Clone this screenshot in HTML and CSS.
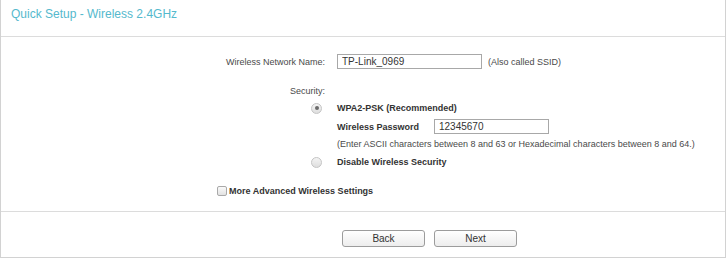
FILE: index.html
```html
<!DOCTYPE html>
<html lang="en">
<head>
  <meta charset="UTF-8" />
  <meta name="viewport" content="width=device-width, initial-scale=1.0"/>
  <title>Quick Setup</title>
  <link rel="stylesheet" href="styles.css">
</head>
<body>
  <div class="pagina">
    <div class="cabecalho">
      <h1 class="titulo">Quick Setup - Wireless 2.4GHz</h1>
    </div>

    <form class="formulario">
      <div class="linha linha-nome">
        <label class="rotulo" for="ssid">Wireless Network Name:</label>
        <div class="campo">
          <input id="ssid" class="entrada entrada-ssid" type="text" value="TP-Link_0969">
          <span class="nota">(Also called SSID)</span>
        </div>
      </div>

      <div class="linha linha-seguranca">
        <span class="rotulo">Security:</span>
      </div>

      <div class="linha linha-opcao">
        <span class="rotulo"><span class="radio marcado"></span></span>
        <span class="campo negrito">WPA2-PSK (Recommended)</span>
      </div>

      <div class="linha linha-senha">
        <span class="rotulo"></span>
        <div class="campo">
          <span class="negrito rotulo-senha">Wireless Password</span>
          <input class="entrada entrada-senha" type="text" value="12345670">
        </div>
      </div>

      <div class="linha linha-dica">
        <span class="rotulo"></span>
        <span class="campo nota">(Enter ASCII characters between 8 and 63 or Hexadecimal characters between 8 and 64.)</span>
      </div>

      <div class="linha linha-desativar">
        <span class="rotulo"><span class="radio"></span></span>
        <span class="campo negrito">Disable Wireless Security</span>
      </div>

      <div class="avancado">
        <span class="caixa"></span>
        <span class="negrito">More Advanced Wireless Settings</span>
      </div>
    </form>

    <div class="rodape">
      <button type="button" class="botao">Back</button>
      <button type="button" class="botao">Next</button>
    </div>
  </div>
</body>
</html>
```

FILE: styles.css
```css
body {
  margin: 0;
  background-color: #fff;
  font-family: "Liberation Sans", Arial, sans-serif;
  font-size: 9px;
  color: #4a4a4a;
}

.pagina {
  width: 726px;
  box-sizing: border-box;
  border-left: 1px solid #d2d2d2;
  border-right: 1px solid #d2d2d2;
  border-bottom: 1px solid #d2d2d2;
}

.cabecalho {
  height: 37px;
  box-sizing: border-box;
  padding: 7px 0 0 10px;
  border-bottom: 1px solid #dcdcdc;
}

.titulo {
  margin: 0;
  font-size: 12px;
  line-height: 15px;
  font-weight: normal;
  color: #55b9cd;
}

.formulario {
  padding: 17px 0 14px;
  border-bottom: 1px solid #dcdcdc;
}

.linha {
  display: flex;
  align-items: center;
  line-height: 12px;
}

.rotulo {
  width: 324px;
  flex-shrink: 0;
  display: flex;
  justify-content: flex-end;
}

.campo {
  margin-left: 12px;
  display: flex;
  align-items: center;
}

.negrito {
  font-weight: bold;
  color: #333;
}

.nota {
  color: #4a4a4a;
}

.linha-seguranca {
  margin-top: 16px;
}

.linha-opcao {
  margin-top: 5px;
}

.linha-senha {
  margin-top: 5px;
}

.linha-dica {
  margin-top: 4px;
}

.linha-desativar {
  margin-top: 6px;
}

.entrada {
  height: 15px;
  box-sizing: border-box;
  border: 1px solid #a8a8a8;
  padding: 0 4px;
  font-family: "Liberation Sans", Arial, sans-serif;
  font-size: 10px;
  color: #333;
  outline: none;
}

.entrada-ssid {
  width: 145px;
  margin-right: 6px;
}

.entrada-senha {
  width: 115px;
}

.rotulo-senha {
  width: 97px;
}

.radio {
  width: 11px;
  height: 11px;
  box-sizing: border-box;
  margin-right: 3px;
  border: 1px solid #c4c4c4;
  border-radius: 50%;
  background: linear-gradient(#f4f4f4, #dedede);
  display: flex;
  justify-content: center;
  align-items: center;
}

.marcado::after {
  content: "";
  width: 4px;
  height: 4px;
  border-radius: 50%;
  background-color: #6a6a6a;
}

.avancado {
  display: flex;
  align-items: center;
  margin-top: 17px;
  padding-left: 216px;
  line-height: 12px;
}

.caixa {
  width: 10px;
  height: 10px;
  box-sizing: border-box;
  margin-right: 2px;
  border: 1px solid #a9a9a9;
  border-radius: 2px;
  background: linear-gradient(#fafafa, #e2e2e2);
}

.rodape {
  height: 45px;
  box-sizing: border-box;
  padding: 18px 0 0 341px;
  display: flex;
  align-items: flex-start;
  gap: 9px;
}

.botao {
  width: 83px;
  height: 17px;
  padding: 0;
  font-family: "Liberation Sans", Arial, sans-serif;
  font-size: 10px;
  color: #333;
  background: linear-gradient(#ffffff, #ededed);
  border: 1px solid #9c9c9c;
  border-radius: 3px;
  cursor: pointer;
}

.botao:hover {
  background: #e6e6e6;
}
```
